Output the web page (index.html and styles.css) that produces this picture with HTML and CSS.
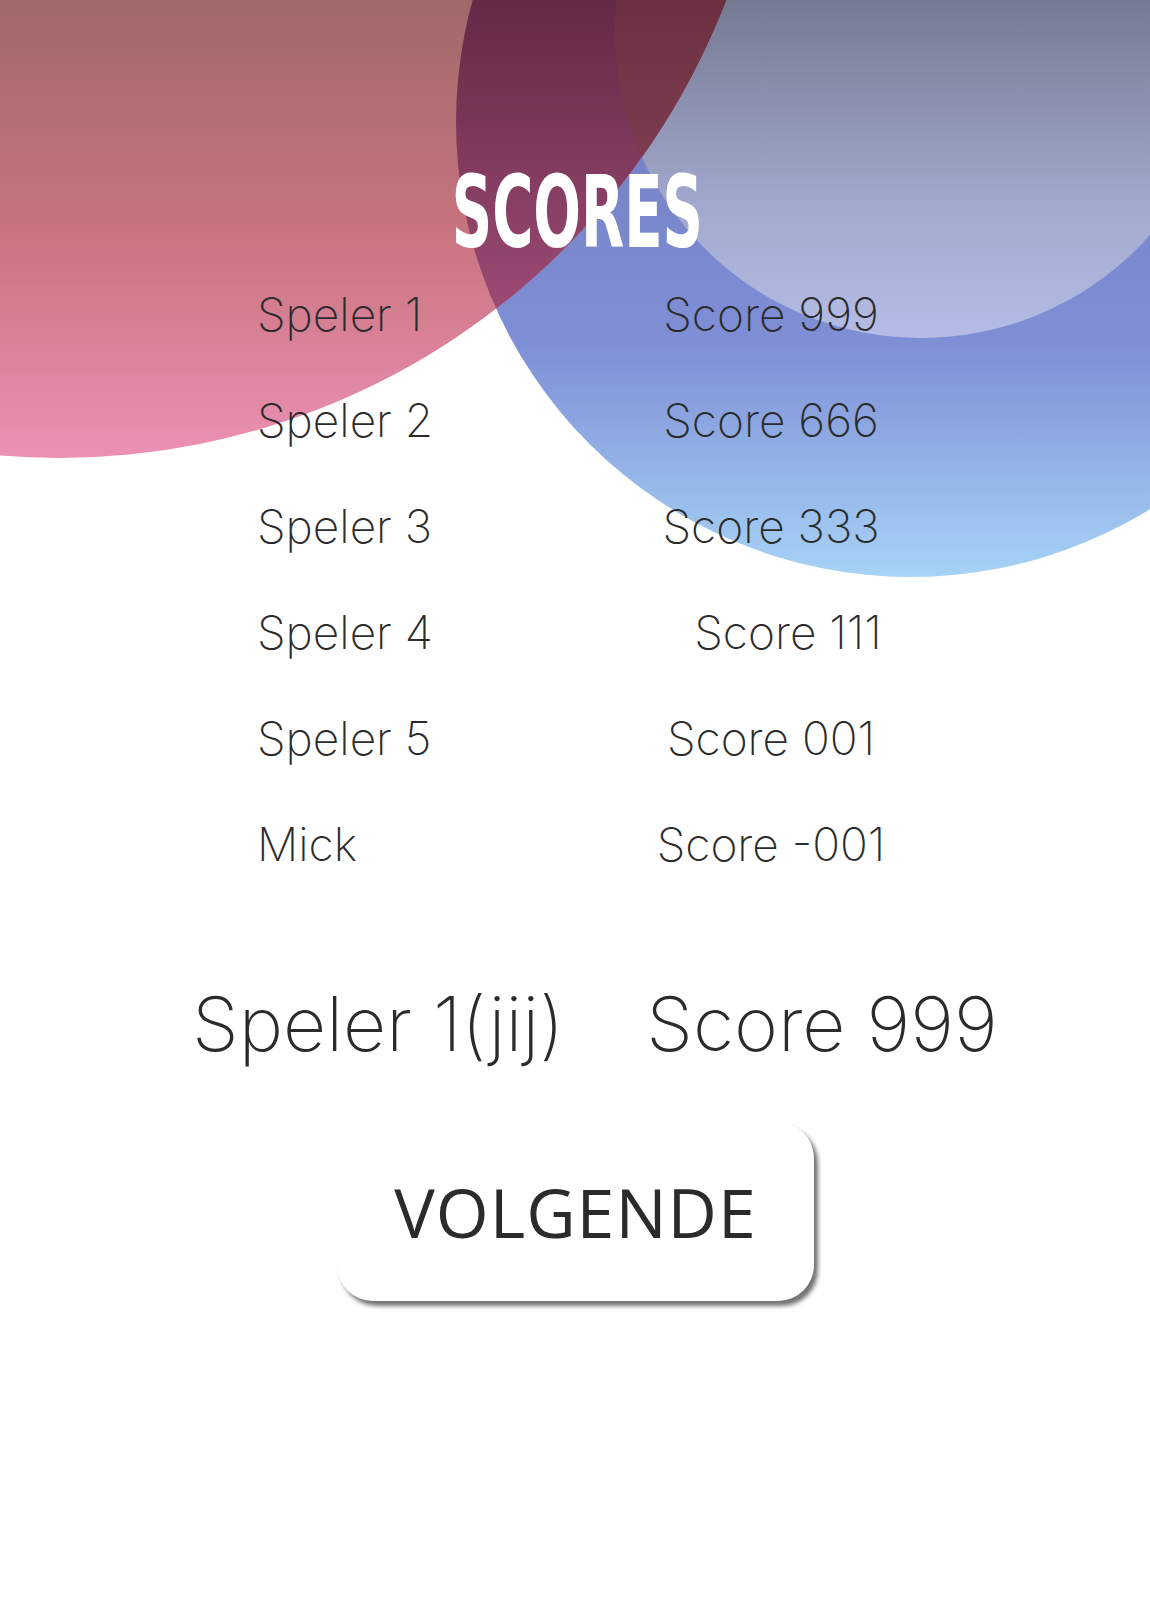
FILE: index.html
```html
<!DOCTYPE html>
<html lang="nl">
<head>
<meta charset="utf-8">
<title>Scores</title>
<link rel="stylesheet" href="styles.css">
</head>
<body>
<div class="page">
  <svg class="bg" width="1150" height="600" viewBox="0 0 1150 600" aria-hidden="true">
    <defs>
      <clipPath id="cr"><circle cx="59" cy="-257" r="715"/></clipPath>
      <linearGradient id="gRed" gradientUnits="userSpaceOnUse" x1="0" y1="0" x2="0" y2="460">
        <stop offset="0" stop-color="#a06a6a"/>
        <stop offset="0.5" stop-color="#c8737d"/>
        <stop offset="1" stop-color="#ec91b4"/>
      </linearGradient>
      <linearGradient id="gBlue" gradientUnits="userSpaceOnUse" x1="0" y1="0" x2="0" y2="577">
        <stop offset="0" stop-color="#7079bd"/>
        <stop offset="0.6" stop-color="#7f8fd6"/>
        <stop offset="1" stop-color="#a6d3f6"/>
      </linearGradient>
      <linearGradient id="gLight" gradientUnits="userSpaceOnUse" x1="0" y1="0" x2="0" y2="338">
        <stop offset="0" stop-color="#757991"/>
        <stop offset="0.6" stop-color="#a2a8cd"/>
        <stop offset="1" stop-color="#b4bde6"/>
      </linearGradient>
      <linearGradient id="gRB" gradientUnits="userSpaceOnUse" x1="0" y1="0" x2="0" y2="310">
        <stop offset="0" stop-color="#632a46"/>
        <stop offset="1" stop-color="#9c4a74"/>
      </linearGradient>
      <linearGradient id="gRL" gradientUnits="userSpaceOnUse" x1="0" y1="0" x2="0" y2="170">
        <stop offset="0" stop-color="#6c3141"/>
        <stop offset="1" stop-color="#7e3c50"/>
      </linearGradient>
    </defs>
    <circle cx="911" cy="122" r="455" fill="url(#gBlue)"/>
    <circle cx="921" cy="32" r="306" fill="url(#gLight)"/>
    <circle cx="59" cy="-257" r="715" fill="url(#gRed)"/>
    <g clip-path="url(#cr)">
      <circle cx="911" cy="122" r="455" fill="url(#gRB)"/>
      <circle cx="921" cy="32" r="306" fill="url(#gRL)"/>
    </g>
  </svg>

  <main class="content">
    <h1 class="title"><span class="title-text">SCORES</span></h1>

    <div class="table">
      <div class="name">Speler 1</div><div class="score">Score 999</div>
      <div class="name">Speler 2</div><div class="score">Score 666</div>
      <div class="name">Speler 3</div><div class="score">Score 333</div>
      <div class="name">Speler 4</div><div class="score score-shift">Score 111</div>
      <div class="name">Speler 5</div><div class="score">Score 001</div>
      <div class="name">Mick</div><div class="score">Score -001</div>
    </div>

    <div class="you">
      <span class="you-name">Speler 1(jij)</span>
      <span class="you-score">Score 999</span>
    </div>

    <button class="next" type="button">VOLGENDE</button>
  </main>
</div>
</body>
</html>
```

FILE: styles.css
```css
html, body {
  margin: 0;
  padding: 0;
  background: #ffffff;
}

.page {
  position: relative;
  width: 1150px;
  height: 1600px;
  overflow: hidden;
}

.bg {
  position: absolute;
  top: 0;
  left: 0;
  display: block;
}

.content {
  position: relative;
  display: flex;
  flex-direction: column;
  padding-top: 163px;
  color: #2b2b2b;
  font-family: Inter, "Open Sans", "DejaVu Sans", sans-serif;
}

.title {
  margin: 0;
  height: 99px;
  display: flex;
  justify-content: center;
  font-family: "Liberation Sans Narrow", "DejaVu Sans Condensed", sans-serif;
  font-weight: 700;
  font-size: 99px;
  line-height: 99px;
  color: #ffffff;
}

.title-text {
  display: inline-block;
  transform: scaleX(0.63);
  transform-origin: 50% 50%;
  margin-left: 4px;
}

.table {
  display: grid;
  grid-template-columns: 300px 428px;
  grid-auto-rows: 106px;
  padding-left: 257px;
  font-weight: 200;
  font-size: 46px;
  line-height: 104px;
}

.name {
  text-align: left;
}

.score {
  text-align: center;
}

.score-shift {
  padding-left: 34px;
}

.you {
  display: flex;
  gap: 82px;
  padding-left: 192px;
  margin-top: 81px;
  font-weight: 200;
  font-size: 75px;
  line-height: 90px;
  white-space: nowrap;
}

.next {
  align-self: flex-start;
  margin: 53px 0 0 337px;
  width: 477px;
  height: 179px;
  padding: 0;
  border: none;
  border-radius: 36px;
  background: #ffffff;
  box-shadow: 4px 5px 4px rgba(0, 0, 0, 0.55);
  display: flex;
  align-items: center;
  justify-content: center;
  font-family: "Open Sans", "DejaVu Sans", sans-serif;
  font-weight: 400;
  font-size: 68px;
  letter-spacing: 1px;
  color: #2b2b2b;
}
```
